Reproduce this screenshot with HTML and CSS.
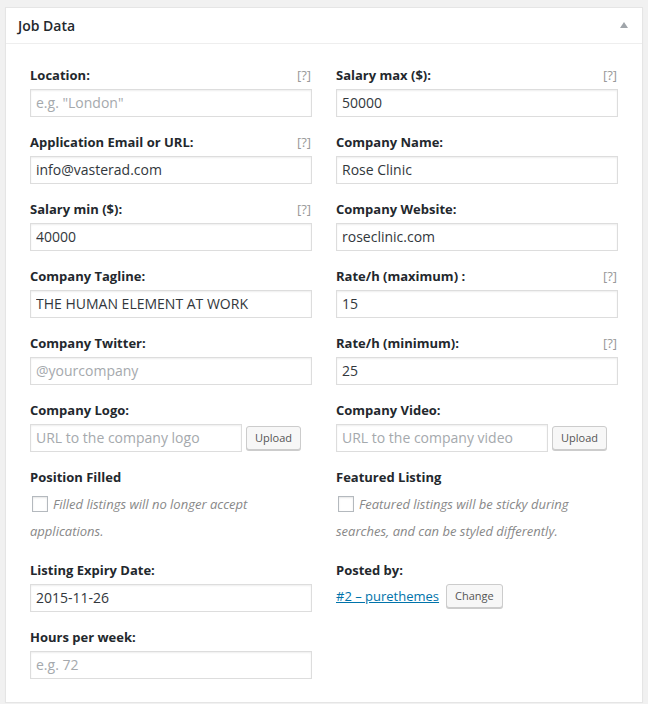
FILE: index.html
```html
<!DOCTYPE html>
<html>
<head>
<meta charset="utf-8">
<link rel="stylesheet" href="styles.css">
</head>
<body>
<div class="panel">
  <div class="panel-head">
    <h2 class="panel-title">Job Data</h2>
    <span class="toggle"></span>
  </div>
  <div class="panel-body">
    <div class="field">
      <div class="label-row"><label>Location:</label><span class="tip">[?]</span></div>
      <input class="text" type="text" placeholder="e.g. &quot;London&quot;">
    </div>
    <div class="field">
      <div class="label-row"><label>Salary max ($):</label><span class="tip">[?]</span></div>
      <input class="text" type="text" value="50000">
    </div>
    <div class="field">
      <div class="label-row"><label>Application Email or URL:</label><span class="tip">[?]</span></div>
      <input class="text" type="text" value="info@vasterad.com">
    </div>
    <div class="field">
      <div class="label-row"><label>Company Name:</label></div>
      <input class="text" type="text" value="Rose Clinic">
    </div>
    <div class="field">
      <div class="label-row"><label>Salary min ($):</label><span class="tip">[?]</span></div>
      <input class="text" type="text" value="40000">
    </div>
    <div class="field">
      <div class="label-row"><label>Company Website:</label></div>
      <input class="text" type="text" value="roseclinic.com">
    </div>
    <div class="field">
      <div class="label-row"><label>Company Tagline:</label></div>
      <input class="text" type="text" value="THE HUMAN ELEMENT AT WORK">
    </div>
    <div class="field">
      <div class="label-row"><label>Rate/h (maximum) :</label><span class="tip">[?]</span></div>
      <input class="text" type="text" value="15">
    </div>
    <div class="field">
      <div class="label-row"><label>Company Twitter:</label></div>
      <input class="text" type="text" placeholder="@yourcompany">
    </div>
    <div class="field">
      <div class="label-row"><label>Rate/h (minimum):</label><span class="tip">[?]</span></div>
      <input class="text" type="text" value="25">
    </div>
    <div class="field">
      <div class="label-row"><label>Company Logo:</label></div>
      <div class="upload-row">
        <input class="text short" type="text" placeholder="URL to the company logo">
        <button class="btn">Upload</button>
      </div>
    </div>
    <div class="field">
      <div class="label-row"><label>Company Video:</label></div>
      <div class="upload-row">
        <input class="text short" type="text" placeholder="URL to the company video">
        <button class="btn">Upload</button>
      </div>
    </div>
    <div class="field">
      <div class="label-row"><label>Position Filled</label></div>
      <p class="desc"><span class="check"></span>Filled listings will no longer accept applications.</p>
    </div>
    <div class="field">
      <div class="label-row"><label>Featured Listing</label></div>
      <p class="desc"><span class="check"></span>Featured listings will be sticky during searches, and can be styled differently.</p>
    </div>
    <div class="field">
      <div class="label-row"><label>Listing Expiry Date:</label></div>
      <input class="text" type="text" value="2015-11-26">
    </div>
    <div class="field">
      <div class="label-row"><label>Posted by:</label></div>
      <div class="posted"><a href="#">#2 – purethemes</a><button class="btn">Change</button></div>
    </div>
    <div class="field">
      <div class="label-row"><label>Hours per week:</label></div>
      <input class="text" type="text" placeholder="e.g. 72">
    </div>
  </div>
</div>
</body>
</html>
```

FILE: styles.css
```css
html, body {
  margin: 0;
  padding: 0;
}
body {
  background: #f1f1f1;
  font-family: "Open Sans", "Liberation Sans", sans-serif;
  color: #444;
  font-size: 13px;
}
.panel {
  margin: 7px 5px 0 5px;
  width: 636px;
  background: #fff;
  border: 1px solid #e5e5e5;
  box-shadow: 0 1px 1px rgba(0,0,0,0.04);
}
.panel-head {
  height: 35px;
  border-bottom: 1px solid #eee;
  display: flex;
  align-items: center;
  justify-content: space-between;
  padding: 0 14px 0 12px;
}
.panel-title {
  margin: 0;
  font-size: 14px;
  font-weight: 600;
  color: #23282d;
  line-height: 20px;
}
.toggle {
  width: 0;
  height: 0;
  border-left: 4px solid transparent;
  border-right: 4px solid transparent;
  border-bottom: 6px solid #a0a5aa;
  margin-top: -1px;
}
.panel-body {
  display: grid;
  grid-template-columns: 282px 282px;
  column-gap: 24px;
  row-gap: 15px;
  padding: 21px 24px 23px 24px;
}
.label-row {
  display: flex;
  justify-content: space-between;
  align-items: center;
  height: 20px;
  margin-bottom: 4px;
}
.label-row label {
  font-weight: 700;
  color: #23282d;
  font-size: 13px;
  line-height: 20px;
}
.tip {
  color: #999;
  font-size: 13px;
  margin-right: 1px;
}
.text {
  display: block;
  box-sizing: border-box;
  width: 282px;
  height: 28px;
  margin: 0;
  padding: 0 5px 2px;
  border: 1px solid #ddd;
  box-shadow: inset 0 1px 2px rgba(0,0,0,0.07);
  font-family: "Open Sans", "Liberation Sans", sans-serif;
  font-size: 14px;
  color: #32373c;
  background: #fff;
  outline: none;
}
.text::placeholder {
  color: #a5a9ad;
}
.upload-row {
  display: flex;
  align-items: center;
  gap: 4px;
}
.text.short {
  width: 212px;
}
.btn {
  box-sizing: border-box;
  height: 24px;
  padding: 0 8px 1px;
  border: 1px solid #ccc;
  border-radius: 3px;
  background: #f7f7f7;
  box-shadow: 0 1px 0 #ccc;
  color: #555;
  font-family: "Open Sans", "Liberation Sans", sans-serif;
  font-size: 11px;
  line-height: 22px;
  cursor: pointer;
}
.desc {
  margin: 0;
  font-style: italic;
  color: #888;
  font-size: 13px;
  line-height: 27px;
}
.check {
  display: inline-block;
  box-sizing: border-box;
  width: 16px;
  height: 16px;
  border: 1px solid #b4b9be;
  background: #fff;
  box-shadow: inset 0 1px 2px rgba(0,0,0,0.1);
  vertical-align: -3px;
  margin: 0 5px 0 2px;
}
.posted {
  display: flex;
  align-items: center;
  gap: 7px;
  margin-top: 2px;
}
.posted a {
  color: #0073aa;
  font-size: 13px;
  text-decoration: underline;
}
.posted .btn {
  height: 24px;
}
```
